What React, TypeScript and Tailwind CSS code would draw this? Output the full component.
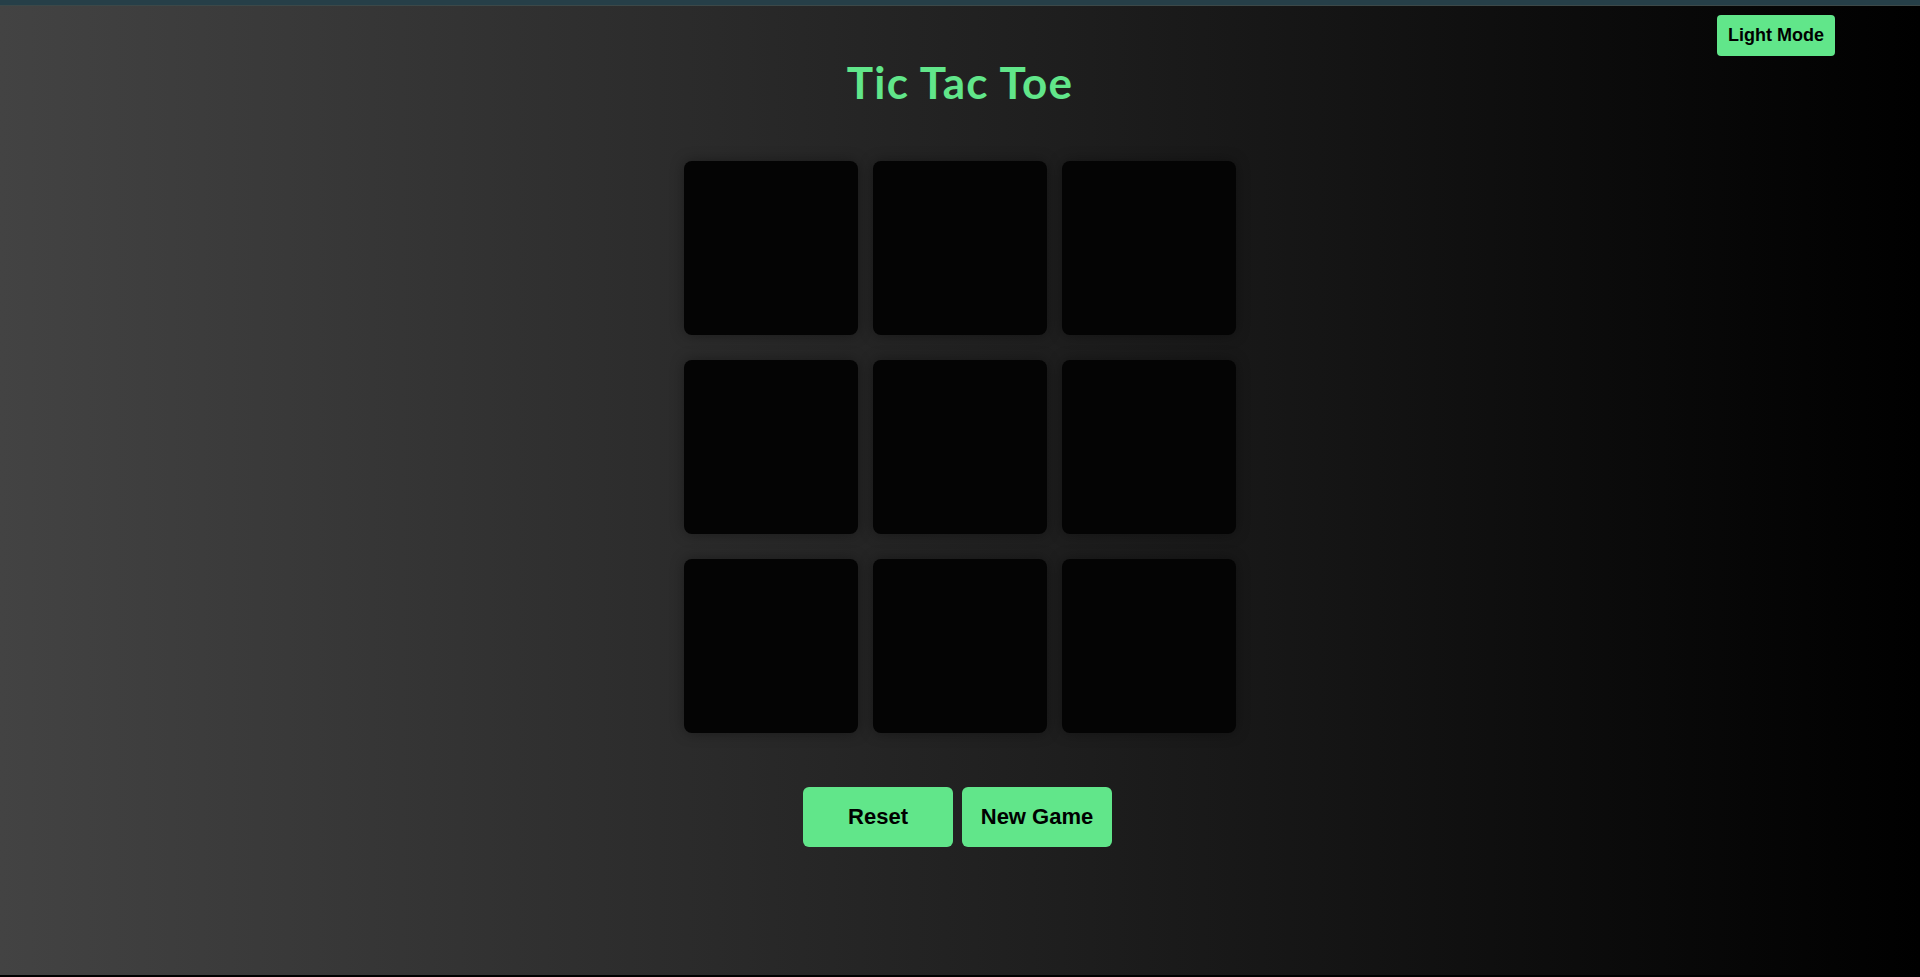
const cells = Array.from({ length: 9 }, (_, i) => i);

const App = () => {
  return (
    <div className="relative w-full h-[977px] overflow-hidden bg-[linear-gradient(to_right,#434343,#000000)] flex flex-col items-center border-b-2 border-black">
      <div className="w-full h-[6px] bg-[#263f48] border-b border-[#3c4848]" />

      <button className="absolute top-[15px] right-[85px] w-[118px] h-[41px] rounded-[4px] bg-[#61e68a] text-black text-[18px] font-bold font-['Liberation_Sans',Arial,sans-serif]">
        Light Mode
      </button>

      <h1 className="mt-[50px] text-[44px] leading-[52px] font-bold text-[#61e68a] font-['Lato','Open_Sans',sans-serif] tracking-[1.3px]">
        Tic Tac Toe
      </h1>

      <div className="mt-[53px] grid grid-cols-[174px_174px_174px] gap-x-[15px] gap-y-[25px]">
        {cells.map((c) => (
          <div
            key={c}
            className="w-[174px] h-[174px] rounded-[8px] bg-[#040404] shadow-[0_0_14px_rgba(0,0,0,0.35)]"
          />
        ))}
      </div>

      <div className="mt-[54px] mr-[5px] flex gap-[9px] font-['Liberation_Sans',Arial,sans-serif]">
        <button className="w-[150px] h-[60px] pb-[2px] rounded-[6px] bg-[#61e68a] text-black text-[22px] font-bold">
          Reset
        </button>
        <button className="w-[150px] h-[60px] pb-[2px] rounded-[6px] bg-[#61e68a] text-black text-[22px] font-bold">
          New Game
        </button>
      </div>
    </div>
  );
};

export default App;
